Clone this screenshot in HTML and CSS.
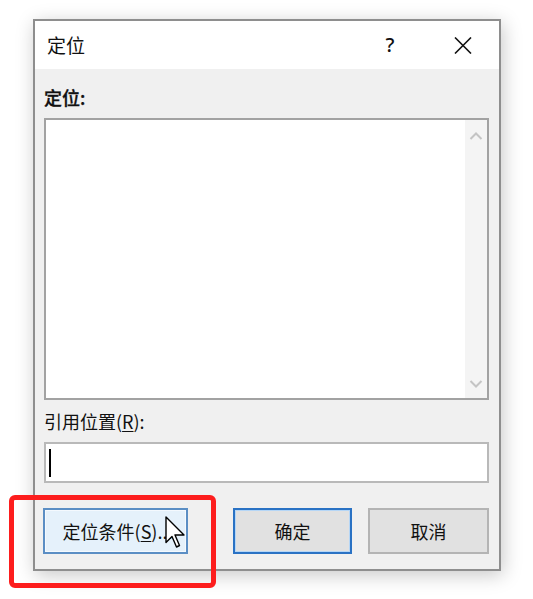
FILE: index.html
```html
<!DOCTYPE html>
<html lang="zh-CN">
<head>
<meta charset="utf-8">
<title>定位</title>
<link rel="stylesheet" href="styles.css">
</head>
<body>
<div class="stage">
  <div class="dialog">
    <div class="titlebar">
      <span class="title">定位</span>
      <span class="help">?</span>
      <span class="close">
        <svg width="18" height="17" viewBox="0 0 18 17"><path d="M1 0.5 L17 16.5 M17 0.5 L1 16.5" stroke="#111" stroke-width="1.6" fill="none"/></svg>
      </span>
    </div>
    <div class="body">
      <div class="label strong">定位:</div>
      <div class="listbox">
        <div class="list-area"></div>
        <div class="scrollbar">
          <svg class="chev" width="14" height="8" viewBox="0 0 14 8"><path d="M1.5 7 L7 1.5 L12.5 7" stroke="#c4c4c4" stroke-width="2" fill="none"/></svg>
          <svg class="chev" width="14" height="8" viewBox="0 0 14 8"><path d="M1.5 1 L7 6.5 L12.5 1" stroke="#c4c4c4" stroke-width="2" fill="none"/></svg>
        </div>
      </div>
      <div class="label second">引用位置(<u>R</u>):</div>
      <div class="input"><span class="caret"></span></div>
      <div class="buttons">
        <div class="btn btn-special">定位条件(<u>S</u>)...</div>
        <div class="btn btn-default">确定</div>
        <div class="btn btn-plain">取消</div>
      </div>
    </div>
  </div>
  <div class="highlight"></div>
  <svg class="cursor" width="21" height="33" viewBox="0 0 21 33"><path d="M1 1 L1 26.5 L7 20.5 L11.5 31 L14.5 29.5 L10 19 L19 19 Z" fill="#fff" stroke="#000" stroke-width="1.4" stroke-linejoin="round"/></svg>
</div>
</body>
</html>
```

FILE: styles.css
```css
html, body {
  margin: 0;
  padding: 0;
  background: #ffffff;
}
.stage {
  position: relative;
  width: 533px;
  height: 599px;
  padding: 19px 0 0 33px;
  box-sizing: border-box;
  overflow: hidden;
  font-family: "Noto Sans CJK SC", "Noto Sans", sans-serif;
  color: #111;
}
.dialog {
  width: 468px;
  height: 552px;
  box-sizing: border-box;
  border: 2px solid #8e8e8e;
  background: #f0f0f0;
  box-shadow: 2px 4px 18px rgba(0,0,0,0.22);
  display: flex;
  flex-direction: column;
}
.titlebar {
  height: 48px;
  background: #ffffff;
  display: flex;
  align-items: center;
  padding: 0 24px 0 12px;
  flex: none;
}
.title {
  flex: 1;
  font-size: 19px;
  line-height: 24px;
}
.help {
  width: 24px;
  text-align: center;
  font-family: "Noto Sans", sans-serif;
  font-size: 20px;
  line-height: 24px;
  font-weight: 500;
}
.close {
  width: 24px;
  margin-left: 49px;
  display: flex;
  justify-content: center;
  align-items: center;
  height: 24px;
}
.body {
  flex: 1;
  padding: 16px 10px 15px 9px;
  display: flex;
  flex-direction: column;
}
.label {
  font-size: 18px;
  line-height: 24px;
  height: 24px;
}
.label.strong {
  font-weight: 500;
  -webkit-text-stroke: 0.3px #111;
}
.label u {
  text-underline-offset: 2px;
}
.second {
  margin-top: 9px;
}
.listbox {
  margin-top: 9px;
  height: 282px;
  box-sizing: border-box;
  border: 2px solid #a2a2a2;
  background: #ffffff;
  display: flex;
}
.list-area {
  flex: 1;
}
.scrollbar {
  width: 22px;
  background: #f4f4f4;
  display: flex;
  flex-direction: column;
  justify-content: space-between;
  align-items: center;
  padding: 12px 0 10px;
  box-sizing: border-box;
}
.input {
  margin-top: 9px;
  height: 41px;
  box-sizing: border-box;
  border: 2px solid #b9b9b9;
  background: #ffffff;
  display: flex;
  align-items: center;
  padding-left: 3px;
}
.caret {
  width: 2px;
  height: 28px;
  background: #000;
}
.buttons {
  margin-top: 25px;
  height: 46px;
  display: flex;
  gap: 16px;
}
.btn {
  height: 46px;
  box-sizing: border-box;
  display: flex;
  align-items: center;
  justify-content: center;
  font-size: 18px;
  line-height: 24px;
}
.btn u {
  text-underline-offset: 2px;
}
.btn-special {
  width: 145px;
  margin-left: -1px;
  margin-right: auto;
  border: 2px solid #5b8ec4;
  background: #e5f1fb;
  box-shadow: inset 0 0 0 1px #f4f9fe;
  padding-left: 4px;
}
.btn-default {
  width: 119px;
  border: 2px solid #2a72c4;
  background: #e1e1e1;
  box-shadow: inset 0 0 0 1px #b5d6f6;
}
.btn-plain {
  width: 121px;
  border: 2px solid #b4b4b4;
  background: #e1e1e1;
}
.highlight {
  position: absolute;
  left: 9px;
  top: 495px;
  width: 207px;
  height: 93px;
  box-sizing: border-box;
  border: 5px solid #fd1d1d;
  border-radius: 6px;
}
.cursor {
  position: absolute;
  left: 165px;
  top: 516px;
}
```
